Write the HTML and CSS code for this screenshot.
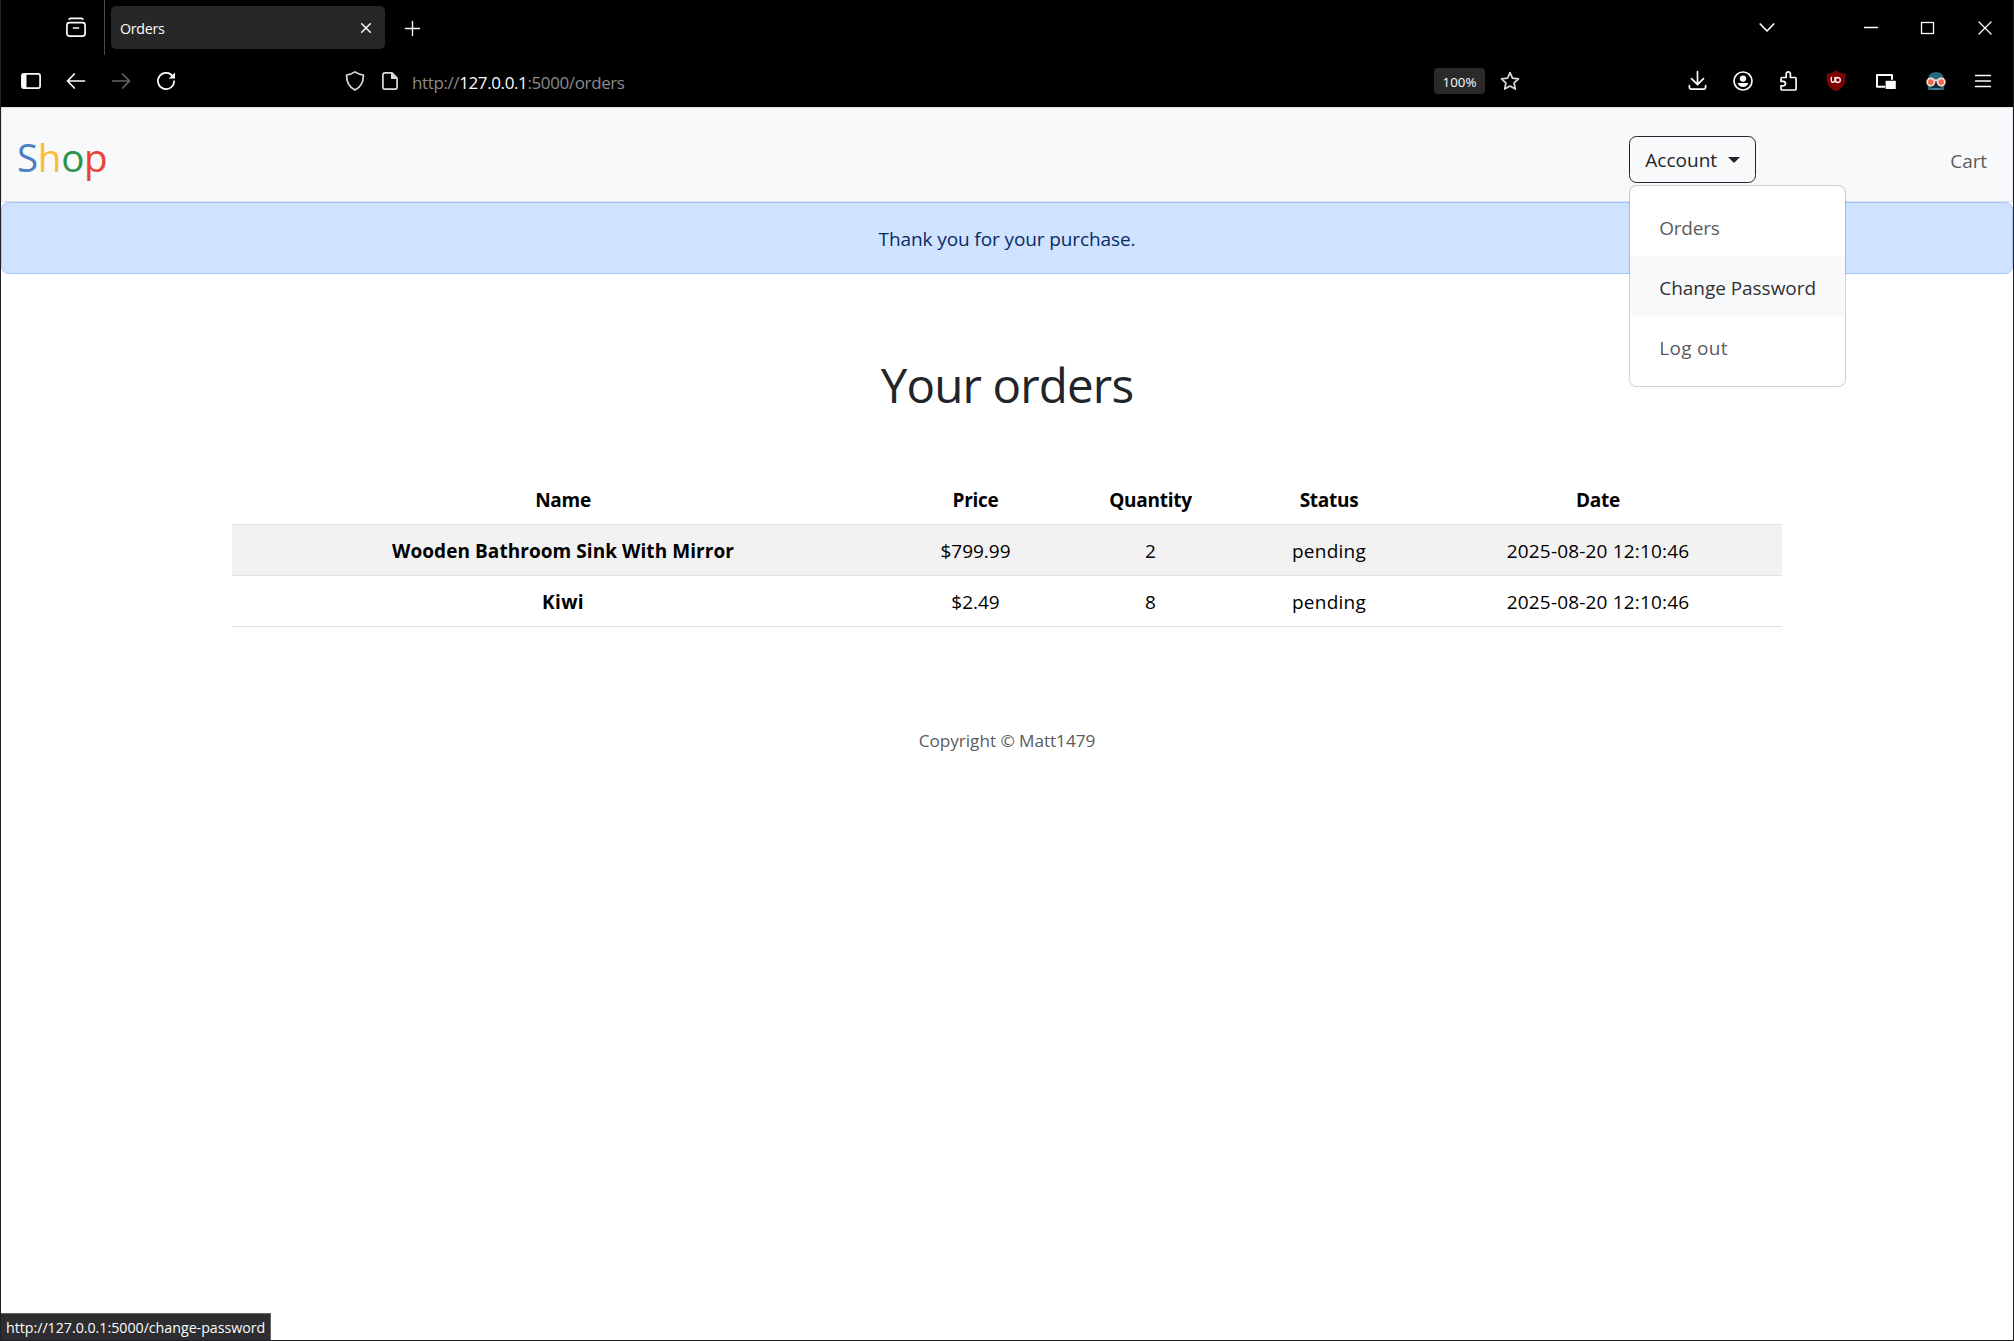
FILE: index.html
```html
<!DOCTYPE html>
<html lang="en">
<head>
<meta charset="utf-8">
<title>Orders</title>
<link rel="stylesheet" href="styles.css">
</head>
<body>
<div class="window">
  <header class="chrome">
    <div class="tab-strip">
      <svg class="icon tab-view" viewBox="0 0 20 20"><path d="M3.2 1.2 Q3.8.4 4.8.4 H15.2 Q16.2.4 16.8 1.2" /><rect x=".9" y="4.6" width="18.2" height="13.6" rx="2.6"/><path d="M7.5 10h5"/></svg>
      <div class="divider"></div>
      <div class="tab">
        <span class="tab-title">Orders</span>
        <svg class="tab-close" viewBox="0 0 10 10"><path d="M.7.7l8.6 8.6M9.3.7L.7 9.3"/></svg>
      </div>
      <svg class="new-tab" viewBox="0 0 16 16"><path d="M8 .5v15M.5 8h15"/></svg>
      <div class="window-controls">
        <svg class="list-tabs" viewBox="0 0 16 14"><path d="M1.2 3L8 10l6.800-7"/></svg>
        <svg class="control" viewBox="0 0 14 14"><path d="M.5 6.500h13"/></svg>
        <svg class="control" viewBox="0 0 14 14"><rect x=".5" y="1.500" width="12" height="11"/></svg>
        <svg class="control" viewBox="0 0 14 14"><path d="M1 1l12 12M13 1L1 13"/></svg>
      </div>
    </div>
    <div class="toolbar">
      <svg class="icon" viewBox="0 0 20 20"><rect x=".9" y="2.900" width="18.200" height="14.200" rx="2"/><path class="solid" d="M1 3h4.500v14H1z"/></svg>
      <svg class="icon" viewBox="0 0 20 20"><path d="M18.500 10H1.500M8.300 3L1.500 10l6.800 7"/></svg>
      <svg class="icon dim" viewBox="0 0 20 20"><path d="M1.500 10h17M11.700 3L18.500 10l-6.800 7"/></svg>
      <svg class="icon" viewBox="0 0 20 20"><path d="M16.800 5.600A8.100 8.100 0 1 0 18.100 10"/><path class="solid" d="M19 1.400V7.600H12.700z"/></svg>
      <div class="address">
        <svg class="icon soft" viewBox="0 0 20 20"><path d="M10 .9Q13.600 3.300 18.400 4Q18.700 14.500 10 19.100Q1.300 14.500 1.600 4Q6.400 3.300 10 .9z"/></svg>
        <svg class="icon soft page-icon" viewBox="0 0 20 20"><path d="M12 1.900H5Q2.900 1.900 2.900 4V16Q2.900 18.100 5 18.100H15Q17.100 18.100 17.100 16V7z"/><path class="solid" d="M11 1.500V8H17.500z"/></svg>
        <span class="url">http://<b>127.0.0.1</b>:5000/orders</span>
      </div>
      <span class="zoom">100%</span>
      <svg class="icon soft star" viewBox="0 0 20 20"><path d="M10 1.600L12.500 7.100L18.500 7.800L14.100 11.900L15.300 18.100L10 15.100L4.700 18.100L5.900 11.900L1.500 7.800L7.500 7.100z"/></svg>
      <div class="actions">
        <svg class="icon" viewBox="0 0 20 20"><path d="M9.500 .5V13.500M3.500 7.600l6 6 6-6M1.400 14.500V16Q1.400 18.100 3.500 18.100H15.500Q17.600 18.100 17.600 16V14.500"/></svg>
        <svg class="icon account-icon" viewBox="0 0 20 20"><circle cx="10" cy="10" r="9"/><circle class="solid" cx="10" cy="7.600" r="3.200"/><path class="solid" d="M4.600 12H15.400Q14 16 10 16Q6 16 4.600 12z"/></svg>
        <svg class="icon ext-icon" viewBox="0 0 20 20"><path d="M2 10.300V7.600Q2 6.500 3.200 6.500H7.200V3.200Q7.200.9 9.300.9T11.400 3.200V6.500H16Q17.100 6.500 17.100 7.600V17.900Q17.100 19 16 19H3.100Q2 19 2 17.900V14.800H4.200Q6.500 14.800 6.500 12.600T4.200 10.300z"/></svg>
        <svg class="icon shield-icon" viewBox="0 0 20 20"><path d="M10 0Q14 2.600 19 3V9Q18.500 16.500 10 20Q1.500 16.500 1 9V3Q6 2.600 10 0z" fill="#800000" stroke="#5c2424" stroke-width=".6"/><path d="M5.300 6.500V9.400Q5.300 11.200 7 11.200T9 9.500V6.500M9.300 9A2.500 2.500 0 1 0 14.300 9A2.500 2.500 0 1 0 9.300 9" stroke-width="1.400"/></svg>
        <svg class="icon pip-icon" viewBox="0 0 20 20"><path class="frame" d="M16 8V4H1V15.800H8.500"/><path class="solid" d="M9.600 9.800h10.200v8.200H9.600z"/></svg>
        <svg class="icon mask-icon" viewBox="0 0 20 20"><path d="M1.800 19V8Q3 1 10 1T18.200 8V19z" fill="#27697c" stroke="none"/><path d="M5 11h10v6H5z" fill="#142a35" stroke="none"/><path d="M5.500 19v-2h9v2z" fill="#447d91" stroke="none"/><circle cx="4.800" cy="11" r="3.700" fill="#f26b4e" stroke="#f5dcd2"/><circle cx="15.200" cy="11" r="3.700" fill="#f26b4e" stroke="#f5dcd2"/><path d="M8.500 9.500Q10 8.500 11.500 9.500" stroke="#f5dcd2"/></svg>
        <svg class="icon menu-icon" viewBox="0 0 20 20"><path d="M2.500 4.500h15M2.500 10h15M2.500 15.500h15"/></svg>
      </div>
    </div>
  </header>

  <nav class="navbar">
    <a class="brand"><span class="blue">S</span><span class="yellow">h</span><span class="green">o</span><span class="red">p</span></a>
    <div class="dropdown">
      <button class="dropdown-toggle">Account<span class="caret"></span></button>
      <ul class="dropdown-menu">
        <li class="w-orders">Orders</li>
        <li class="active">Change Password</li>
        <li class="w-logout">Log out</li>
      </ul>
    </div>
    <a class="cart">Cart</a>
  </nav>

  <div class="alert">Thank you for your purchase.</div>

  <main>
    <h1>Your orders</h1>
    <table>
      <colgroup><col class="c-name"><col class="c-price"><col class="c-qty"><col class="c-status"><col class="c-date"></colgroup>
      <thead>
        <tr><th>Name</th><th>Price</th><th>Quantity</th><th>Status</th><th>Date</th></tr>
      </thead>
      <tbody>
        <tr class="striped"><td class="product">Wooden Bathroom Sink With Mirror</td><td>$799.99</td><td>2</td><td class="state">pending</td><td class="date">2025-08-20 12:10:46</td></tr>
        <tr><td class="product kiwi">Kiwi</td><td>$2.49</td><td>8</td><td class="state">pending</td><td class="date">2025-08-20 12:10:46</td></tr>
      </tbody>
    </table>
  </main>

  <footer>Copyright © Matt1479</footer>
  <div class="status">http://127.0.0.1:5000/change-password</div>
</div>
</body>
</html>
```
FILE: styles.css
```css
* { box-sizing: border-box; }
body {
  margin: 0;
  background: #fff;
  color: #212529;
  font: 19px/30px "Open Sans", "Noto Sans", sans-serif;
}
.window {
  position: relative;
  height: 1341px;
  overflow: hidden;
  border: 1px solid #202124;
  border-top: 0;
}

/* browser chrome */
.chrome { height: 107px; background: #000; color: #fbfbfe; margin: 0 -1px; }
.chrome svg { display: block; flex: none; fill: none; stroke: #fbfbfe; stroke-width: 1.7; stroke-linecap: round; stroke-linejoin: round; overflow: visible; }
.chrome svg .solid { fill: #fbfbfe; stroke: none; }
.chrome svg.dim { stroke: #656568; }
.chrome svg.soft { stroke: #dcdcdc; }
.chrome svg.soft .solid { fill: #dcdcdc; }
.icon { width: 20px; height: 20px; }
.tab-strip { display: flex; align-items: center; height: 55px; }
.tab-view { margin-left: 66px; }
.divider { width: 1px; height: 55px; margin-left: 18px; background: #4a4a4a; }
.tab {
  display: flex; align-items: center; justify-content: space-between;
  width: 274px; height: 43px; margin-left: 6px; padding: 0 14px 0 9px;
  background: #272727; border-radius: 5px;
}
.tab-title { padding-top: 2px; font-size: 14.25px; letter-spacing: -.3px; }
.tab .tab-close { width: 10px; height: 10px; stroke-width: 1.5; }
.chrome .new-tab { width: 15px; height: 15px; margin: 2px 0 0 20px; stroke-width: 1.5; }
.window-controls { display: flex; align-items: center; margin-left: auto; padding-right: 22px; gap: 43px; }
.chrome .list-tabs { width: 16px; height: 14px; margin-right: 46px; }
.chrome .control { width: 14px; height: 14px; stroke-width: 1.3; stroke-linejoin: miter; }

.toolbar { display: flex; align-items: center; gap: 25px; height: 52px; padding-left: 21px; }
.address { display: flex; align-items: center; margin-left: 144px; }
.page-icon { margin-left: 15px; }
.url { margin-left: 12px; padding-top: 3px; font-size: 17px; letter-spacing: -.385px; color: #8a8a8c; }
.url b { font-weight: 400; color: #fbfbfe; }
.zoom {
  margin: 0 -10px 0 auto; width: 51px; height: 26px; border-radius: 4px;
  background: #2a2a2a; font-size: 13.3px; line-height: 28px; text-align: center;
}
.actions { display: flex; align-items: center; gap: 25px; margin-left: 143px; padding-right: 21px; }
.ext-icon { margin-left: 1px; }
.shield-icon { margin-left: 2px; }
.pip-icon, .mask-icon { margin-left: 5px; }
.pip-icon .frame { stroke-width: 2; }
.chrome .menu-icon { margin-left: 2px; stroke-width: 1.4; }

/* site header */
.navbar {
  display: flex; align-items: flex-start; height: 95px; padding: 28px 25px 0 15px;
  background: #f8f9fa; border: 1px solid #dee2e6;
}
.brand { margin-top: -1px; font-size: 38.5px; line-height: 44px; letter-spacing: -.3px; }
.blue { color: #4c7fc4; }
.yellow { color: #fbbc33; }
.green { color: #2a934c; }
.red { color: #ea4335; }
.dropdown { position: relative; margin-left: auto; }
.dropdown-toggle {
  display: flex; align-items: center; width: 127px; height: 47px; padding: 1px 0 0 15px;
  border: 1px solid #212529; border-radius: 7.5px; background: transparent;
  color: #212529; font: inherit;
}
.caret { margin: -1px 0 0 11px; border: 6px solid transparent; border-top-color: currentColor; border-bottom: 0; }
.dropdown-menu {
  position: absolute; top: 49px; left: 0; z-index: 2;
  width: 217px; margin: 0; padding: 10px 0; list-style: none;
  background: #fff; background-clip: padding-box;
  border: 1px solid rgba(0, 0, 0, .18); border-radius: 7.5px;
}
.dropdown-menu li { height: 60px; padding: 17px 29px 13px; color: #5b5c5d; white-space: nowrap; }
.dropdown-menu li.active { background: #f8f9fa; color: #303234; letter-spacing: -.05px; }
.dropdown-menu .w-orders { letter-spacing: -.25px; }
.dropdown-menu .w-logout { letter-spacing: .28px; }
.cart { margin: 10px 0 0 194px; color: #5b5c5d; letter-spacing: -.1px; }

.alert {
  height: 72px; padding: 21px 20px 19px; text-align: center; letter-spacing: -.1px;
  background: #cfe2ff; border: 1px solid #9ec5fe; border-radius: 7.5px; color: #052c65;
}

/* orders */
h1 { margin: 81px 0 0; font-size: 47.5px; font-weight: 400; line-height: 60px; letter-spacing: -.85px; text-align: center; }
table {
  width: 1550px; margin: 59px auto 0; table-layout: fixed;
  border-collapse: separate; border-spacing: 0; color: #000; text-align: center;
}
.c-name { width: 662px; }
.c-price { width: 163px; }
.c-qty { width: 187px; }
.c-status { width: 170px; }
.c-date { width: 368px; }
th, td { height: 51px; padding: 11px 10px 9px; border-bottom: 1px solid #dee2e6; }
th { font-weight: 700; letter-spacing: -.28px; }
.striped td { background: #f2f2f2; }
.product { font-weight: 700; letter-spacing: .06px; }
.kiwi { letter-spacing: .4px; }
.state { letter-spacing: .25px; }
.date { letter-spacing: .17px; }

footer { margin-top: 99px; text-align: center; font-size: 17.2px; letter-spacing: -.05px; color: #5b5c5d; }

/* link target shown while hovering */
.status {
  position: absolute; left: 0; bottom: 0; width: 270px; height: 27px; padding: 0 0 0 5px;
  background: #2e2e31; border: 1px solid #646466; border-width: 1px 1px 0 0;
  color: #fbfbfe; font-size: 14.25px; line-height: 28px; letter-spacing: -.03px; white-space: nowrap;
}
```
